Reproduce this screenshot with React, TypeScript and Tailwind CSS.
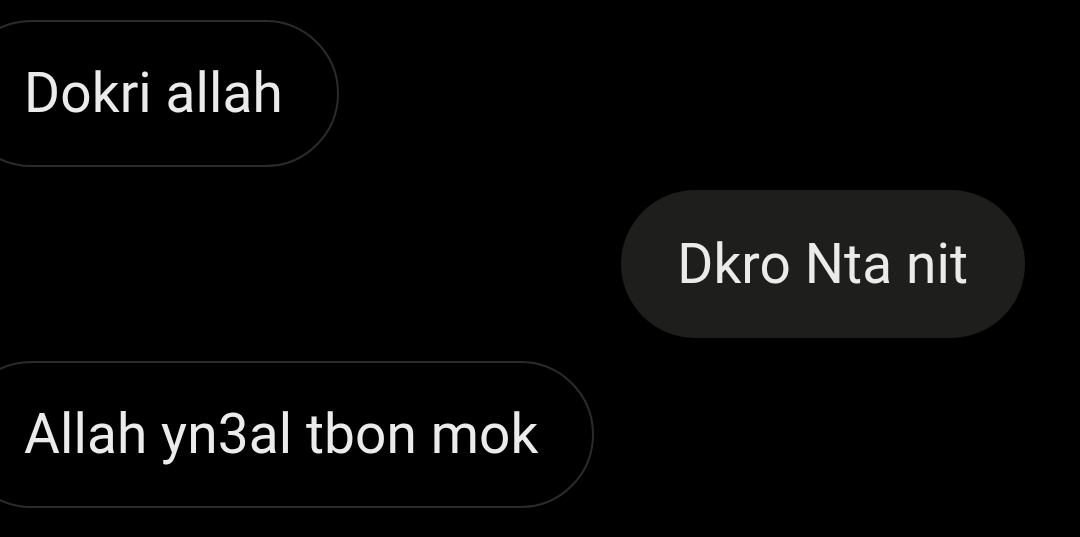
const messages = [
  { text: "Dokri allah", mine: false },
  { text: "Dkro Nta nit", mine: true },
  { text: "Allah yn3al tbon mok", mine: false },
];

export default function App() {
  return (
    <div
      className="w-[1080px] h-[537px] bg-black overflow-hidden flex flex-col gap-[23px] pt-[20px]"
      style={{ fontFamily: "Roboto, 'Noto Sans', sans-serif" }}
    >
      {messages.map((m, i) =>
        m.mine ? (
          <div key={i} className="flex justify-end pr-[55px]">
            <div className="h-[148px] rounded-full bg-[#1e1f1c] flex items-center pl-[56px] pr-[57px]">
              <span className="text-[55px] text-[#ebebeb] leading-none tracking-[0.1px]">{m.text}</span>
            </div>
          </div>
        ) : (
          <div key={i} className="flex justify-start">
            <div className="-ml-[42px] h-[147px] rounded-full border-2 border-[#2b2b2b] flex items-center pl-[64px] pr-[54px]">
              <span className="text-[55px] text-[#ebebeb] leading-none tracking-[0.1px]">{m.text}</span>
            </div>
          </div>
        )
      )}
    </div>
  );
}
